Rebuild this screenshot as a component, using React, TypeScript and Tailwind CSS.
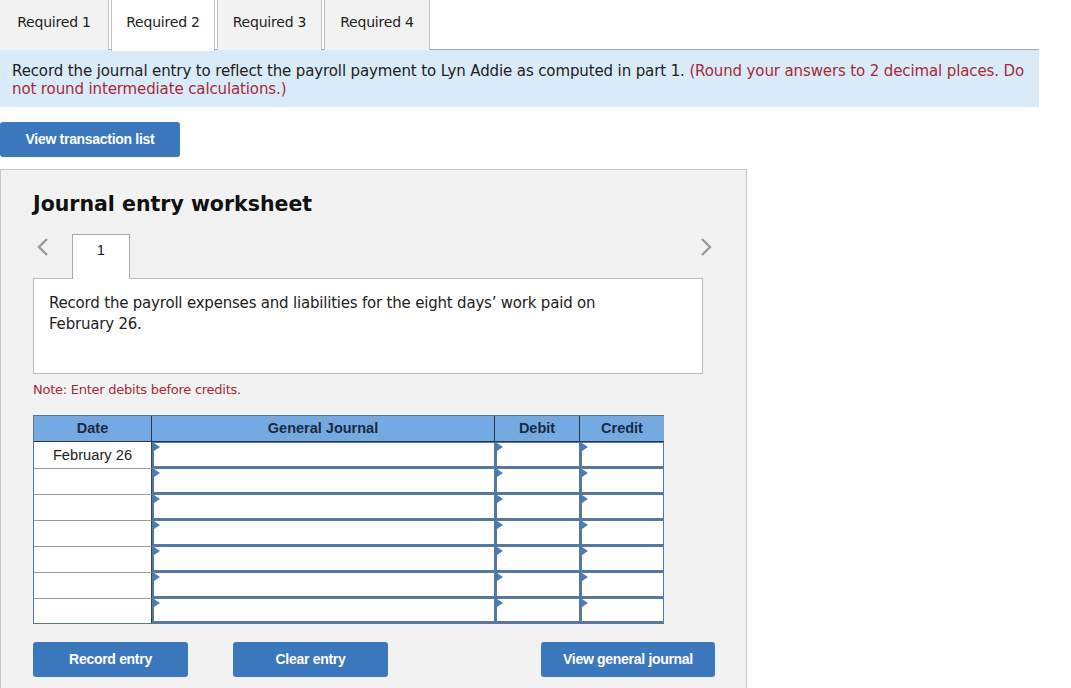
import React from "react";

const verdana = "font-['DejaVu_Sans',Verdana,sans-serif]";
const arial = "font-['Liberation_Sans',Arial,sans-serif]";

const tabs = [
    { label: "Required 1", w: "w-[109px]" },
    { label: "Required 2", w: "w-[104px]" },
    { label: "Required 3", w: "w-[105px]" },
    { label: "Required 4", w: "w-[106px]" },
];

function Marker() {
    return (
        <span className="absolute left-0 top-0 w-0 h-0 border-y-[4px] border-y-transparent border-l-[6px] border-l-[#4a7dbb]" />
    );
}

function InputCell({ last }: { last?: boolean }) {
    return (
        <div className={`relative bg-white border-l-2 border-r border-t border-b-2 border-[#56779f] ${last ? "h-[25px]" : "h-[26px]"}`}>
            <Marker />
        </div>
    );
}

function Row({ date, first, last }: { date?: string; first?: boolean; last?: boolean }) {
    return (
        <>
            <div
                className={`bg-white text-[14.7px] text-[#222] flex items-center justify-center border-r border-[#2d4464] ${
                    first ? "" : "border-t border-t-[#9a9a9a]"
                } ${last ? "h-[25px]" : "h-[26px]"}`}
            >
                {date}
            </div>
            <InputCell last={last} />
            <InputCell last={last} />
            <InputCell last={last} />
        </>
    );
}

export default function App() {
    return (
        <div className={`w-[1071px] h-[688px] overflow-hidden bg-white ${verdana}`}>
            {/* Tabs */}
            <div className="flex w-[1039px] h-[50px] border-b border-[#a9a9a9]">
                {tabs.map((t, i) => (
                    <div
                        key={t.label}
                        className={`${t.w} flex items-center justify-center text-[14px] tracking-[-0.2px] text-[#222] border-x border-[#c3c3c3] mr-[2px] ${
                            i === 1 ? "bg-white h-[51px] -mb-px pb-[6px]" : "bg-[#f2f2f2] h-[50px] pb-[5px]"
                        } ${i === 0 ? "border-l-0" : ""}`}
                    >
                        {t.label}
                    </div>
                ))}
            </div>

            {/* Instructions */}
            <div className="w-[1039px] h-[57px] bg-[#d9eaf8] px-[12px] pt-[12px] text-[15px] leading-[18px] tracking-[-0.12px] text-[#222]">
                Record the journal entry to reflect the payroll payment to Lyn Addie as computed in part 1.{" "}
                <span className="text-[#a52a3a]">(Round your answers to 2 decimal places. Do not round intermediate calculations.)</span>
            </div>

            <button className={`mt-[15px] w-[180px] h-[35px] rounded-[3px] bg-[#3b77bd] text-white text-[14px] font-bold tracking-[-0.3px] ${arial}`}>
                View transaction list
            </button>

            {/* Worksheet panel */}
            <div className="mt-[12px] w-[747px] h-[530px] bg-[#f2f2f2] border border-[#c8c8c8] pl-[32px] pt-[22px]">
                <h2 className="text-[20.5px] font-bold text-[#111] leading-[24px]">Journal entry worksheet</h2>

                <div className="mt-[17px] flex items-end w-[670px] h-[45px] relative">
                    <span className="absolute left-[3px] top-[4px]">
                        <svg width="14" height="20" viewBox="0 0 14 20"><path d="M11 2 L3 10 L11 18" fill="none" stroke="#9a9a9a" strokeWidth="2.4" /></svg>
                    </span>
                    <span className="absolute right-[-10px] top-[4px]">
                        <svg width="14" height="20" viewBox="0 0 14 20"><path d="M3 2 L11 10 L3 18" fill="none" stroke="#9a9a9a" strokeWidth="2.4" /></svg>
                    </span>
                    <div className="ml-[39px] w-[58px] h-[45px] bg-white border border-b-0 border-[#a9a9a9] flex justify-center pt-[5px] text-[14px] text-[#111] -mb-px relative z-10">
                        <span className={arial}>1</span>
                    </div>
                </div>

                <div className="w-[670px] h-[96px] bg-white border border-[#bdbdbd] px-[15px] pt-[14px] text-[15px] leading-[21px] tracking-[-0.2px] text-[#222]">
                    Record the payroll expenses and liabilities for the eight days’ work paid on
                    <br />
                    February 26.
                </div>

                <p className="mt-[8px] text-[13px] text-[#a52a3a] leading-[16px] tracking-[-0.25px]">Note: Enter debits before credits.</p>

                {/* Table */}
                <div className={`mt-[17px] w-[631px] border border-[#5f7591] grid grid-cols-[118px_343px_85px_84px] ${arial}`}>
                    <div className="h-[26px] bg-[#75a9e2] border-b border-r border-[#22385a] flex items-center justify-center text-[14.5px] font-bold text-[#1c2a3f]">Date</div>
                    <div className="h-[26px] bg-[#75a9e2] border-b border-r border-[#22385a] flex items-center justify-center text-[14.5px] font-bold text-[#1c2a3f]">General Journal</div>
                    <div className="h-[26px] bg-[#75a9e2] border-b border-r border-[#22385a] flex items-center justify-center text-[14.5px] font-bold text-[#1c2a3f]">Debit</div>
                    <div className="h-[26px] bg-[#75a9e2] border-b border-[#22385a] flex items-center justify-center text-[14.5px] font-bold text-[#1c2a3f]">Credit</div>
                    <Row date="February 26" first />
                    <Row />
                    <Row />
                    <Row />
                    <Row />
                    <Row />
                    <Row last />
                </div>

                {/* Buttons */}
                <div className={`mt-[18px] flex w-[682px] text-[14px] font-bold text-white tracking-[-0.3px] ${arial}`}>
                    <button className="w-[155px] h-[35px] rounded-[3px] bg-[#3b77bd]">Record entry</button>
                    <button className="ml-[45px] w-[155px] h-[35px] rounded-[3px] bg-[#3b77bd]">Clear entry</button>
                    <button className="ml-auto w-[174px] h-[35px] rounded-[3px] bg-[#3b77bd]">View general journal</button>
                </div>
            </div>
        </div>
    );
}
